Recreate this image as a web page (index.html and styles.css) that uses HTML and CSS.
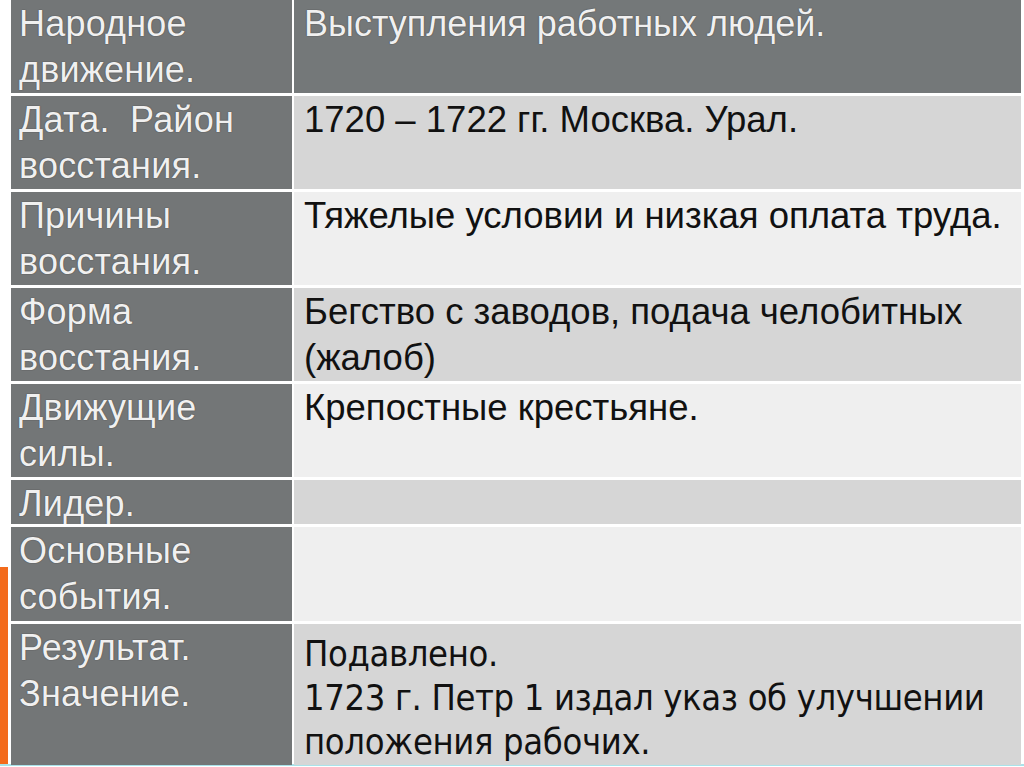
FILE: index.html
```html
<!DOCTYPE html>
<html lang="ru">
<head>
<meta charset="utf-8">
<title>Выступления работных людей</title>
<link rel="stylesheet" href="styles.css">
</head>
<body>
<div class="slide">
  <div class="accent"></div>
  <div class="baseline"></div>
  <div class="table">
    <div class="cell label">Народное движение.</div>
    <div class="cell head">Выступления работных людей.</div>

    <div class="cell label">Дата.&nbsp; Район восстания.</div>
    <div class="cell value band">1720 – 1722 гг. Москва. Урал.</div>

    <div class="cell label">Причины восстания.</div>
    <div class="cell value plain">Тяжелые условии и низкая оплата труда.</div>

    <div class="cell label">Форма восстания.</div>
    <div class="cell value band">Бегство с заводов, подача челобитных (жалоб)</div>

    <div class="cell label">Движущие силы.</div>
    <div class="cell value plain">Крепостные крестьяне.</div>

    <div class="cell label">Лидер.</div>
    <div class="cell value band"></div>

    <div class="cell label">Основные события.</div>
    <div class="cell value plain"></div>

    <div class="cell label">Результат. Значение.</div>
    <div class="cell value band narrow">Подавлено.<br>1723 г. Петр 1 издал указ об улучшении положения рабочих.</div>
  </div>
</div>
</body>
</html>
```

FILE: styles.css
```css
html, body {
  margin: 0;
  padding: 0;
  background: #ffffff;
}

.slide {
  position: relative;
  width: 1024px;
  height: 767px;
  overflow: hidden;
  background: #ffffff;
}

.accent {
  position: absolute;
  left: 0;
  top: 567px;
  width: 8px;
  height: 198px;
  background: #f36b1c;
}

.baseline {
  position: absolute;
  left: 0;
  top: 764px;
  width: 1024px;
  height: 2px;
  background: #a9e3ea;
}

.table {
  position: relative;
  margin-left: 11px;
  width: 1010px;
  display: grid;
  grid-template-columns: 281px 727px;
  grid-template-rows: 93px 93px 93px 93px 93px 44px 94px 141px;
  column-gap: 2px;
  row-gap: 3px;
  font-family: "Liberation Sans", Arial, sans-serif;
  font-size: 36px;
  line-height: 46px;
}

.cell {
  box-sizing: border-box;
  overflow: hidden;
  padding-top: 1px;
}

.label {
  background: #737677;
  color: #f0f0f0;
  padding-left: 8px;
  padding-right: 6px;
  letter-spacing: 0.2px;
  text-shadow: 0 0 1px #4a4a4a, 0 0 1px #4a4a4a;
}

.head {
  background: #747879;
  color: #f0f0f0;
  padding-left: 10px;
  padding-right: 10px;
  text-shadow: 0 0 1px #4a4a4a, 0 0 1px #4a4a4a;
}

.value {
  color: #111111;
  padding-left: 10px;
  padding-right: 8px;
  font-size: 36.5px;
}

.band {
  background: #d6d6d6;
}

.plain {
  background: #efefef;
}

.narrow {
  font-family: "DejaVu Sans Condensed", "Liberation Sans Narrow", sans-serif;
  font-size: 36px;
  line-height: 44px;
  letter-spacing: -0.35px;
  padding-top: 8px;
}
```
